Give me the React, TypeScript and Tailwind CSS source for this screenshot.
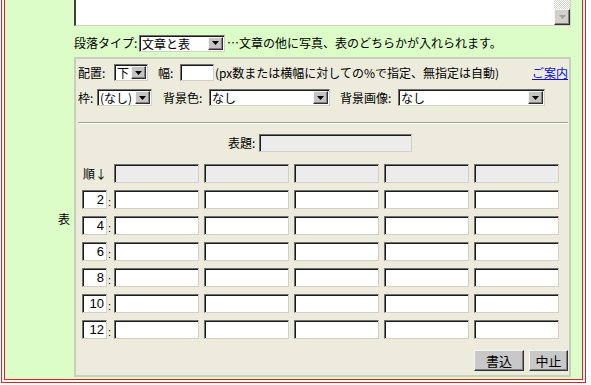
import React from "react";

const F = "font-['Noto_Sans_CJK_JP',sans-serif]";
const INSET =
  "border border-t-[#707070] border-l-[#707070] border-r-[#d4d0c8] border-b-[#d4d0c8] shadow-[inset_1px_1px_0_#1a1a1a]";
const RAISED =
  "border border-t-[#f4f4f4] border-l-[#f4f4f4] border-r-[#303030] border-b-[#303030] shadow-[inset_-1px_-1px_0_#808080]";

function Tri({ color = "#000" }: { color?: string }) {
  return (
    <svg width="7" height="4" viewBox="0 0 7 4">
      <polygon points="0,0 7,0 3.5,4" fill={color} />
    </svg>
  );
}

function Select({ className, text }: { className: string; text: string }) {
  return (
    <div className={`${className} h-[17px] flex bg-white ${INSET}`}>
      <div className="flex-1 pl-[2px] pt-[1px] leading-[13px] whitespace-nowrap overflow-hidden">
        {text}
      </div>
      <div
        className={`w-[15px] my-[1px] mr-[1px] bg-[#c4c4c4] flex items-center justify-center ${RAISED}`}
      >
        <Tri />
      </div>
    </div>
  );
}

function Cell({ gray }: { gray?: boolean }) {
  return (
    <div
      className={`w-[85px] h-[19px] ${gray ? "bg-[#ececec]" : "bg-white"} ${INSET}`}
    />
  );
}

const ROWS = ["2", "4", "6", "8", "10", "12"];

export default function App() {
  return (
    <div
      className={`w-[591px] h-[385px] overflow-hidden bg-white ${F} text-[12px] leading-[14px] text-black`}
    >
      <div className="ml-[1px] -mt-[40px] w-[585px] border border-[#cc2a2a] bg-[#fff4f4] p-[2px]">
        <div className="border border-[#cc2a2a] bg-[#dcfcc8] flex flex-col">
          {/* row A */}
          <div className="flex">
            <div className="w-[69px] shrink-0" />
            <div className="w-[498px] flex flex-col">
              <div
                className={`w-[497px] h-[62px] bg-white flex justify-end border-t-2 border-l-2 border-r border-b border-t-[#404040] border-l-[#404040] border-r-[#d4d0c8] border-b-[#d4d0c8]`}
              >
                <div className="w-[16px] flex flex-col bg-[repeating-conic-gradient(#d4d0c8_0_25%,#ffffff_0_50%)] bg-[length:2px_2px]">
                  <div className="flex-1" />
                  <div
                    className={`h-[16px] bg-[#d4d0c8] flex items-center justify-center ${RAISED}`}
                  >
                    <Tri color="#a0a0a0" />
                  </div>
                </div>
              </div>
              <div className="mt-[8px] mb-[5px] h-[18px] flex items-center">
                <span className="w-[65px]">段落タイプ:</span>
                <Select className="w-[86px]" text="文章と表" />
                <span className="ml-[2px]">…文章の他に写真、表のどちらかが入れられます。</span>
              </div>
            </div>
          </div>
          {/* row B */}
          <div className="flex pb-[2px]">
            <div className="w-[69px] shrink-0 flex items-center justify-end pr-[4px] pt-[3px]">
              表
            </div>
            <div className="w-[497px] h-[320px] border-2 border-[#c9cfbd] bg-[#ecebdc] flex flex-col">
              {/* row 1 */}
              <div className="mt-[5px] h-[17px] flex items-center pl-[2px] pr-[1px]">
                <span className="w-[36px]">配置:</span>
                <Select className="w-[34px]" text="下" />
                <span className="ml-[10px] w-[22px]">幅:</span>
                <div className={`w-[34px] h-[17px] bg-white ${INSET}`} />
                <span className="ml-[1px] whitespace-nowrap">
                  (px数または横幅に対しての%で指定、無指定は自動)
                </span>
                <span className="ml-auto text-[#1010d0] underline">ご案内</span>
              </div>
              {/* row 2 */}
              <div className="mt-[8px] h-[17px] flex items-center pl-[2px]">
                <span className="w-[19px]">枠:</span>
                <Select className="w-[55px]" text="(なし)" />
                <span className="ml-[11px] w-[46px]">背景色:</span>
                <Select className="w-[121px]" text="なし" />
                <span className="ml-[10px] w-[58px]">背景画像:</span>
                <Select className="w-[147px]" text="なし" />
              </div>
              {/* hr */}
              <div className="mt-[16px] ml-[2px] mr-[1px] border-t border-b border-t-[#a0a09a] border-b-white" />
              {/* title */}
              <div className="mt-[10px] h-[18px] flex items-center pl-[152px]">
                <span className="w-[31px]">表題:</span>
                <div className={`w-[153px] h-[18px] bg-[#ececec] ${INSET}`} />
              </div>
              {/* grid */}
              <div className="mt-[12px] pl-[6px] flex flex-col gap-[7px]">
                <div className="flex items-center h-[19px]">
                  <span className="w-[32px] pl-[1px]">順↓</span>
                  <div className="flex gap-[5px]">
                    <Cell gray />
                    <Cell gray />
                    <Cell gray />
                    <Cell gray />
                    <Cell gray />
                  </div>
                </div>
                {ROWS.map((n) => (
                  <div key={n} className="flex items-center h-[19px]">
                    <div className="w-[32px] flex items-center">
                      <div
                        className={`w-[25px] h-[19px] bg-white ${INSET} flex items-center justify-end pr-[2px] font-['Liberation_Sans',sans-serif] text-[13px]`}
                      >
                        {n}
                      </div>
                      <span className="font-['Liberation_Sans',sans-serif] text-[11px] pl-[1px] pt-[4px]">:</span>
                    </div>
                    <div className="flex gap-[5px]">
                      <Cell />
                      <Cell />
                      <Cell />
                      <Cell />
                      <Cell />
                    </div>
                  </div>
                ))}
              </div>
              {/* buttons */}
              <div className="mt-[11px] flex justify-end gap-[5px] pr-[1px]">
                <div
                  className={`w-[50px] h-[21px] bg-[#c8c8c8] flex items-center justify-center text-[13px] ${RAISED}`}
                >
                  書込
                </div>
                <div
                  className={`w-[39px] h-[21px] bg-[#c8c8c8] flex items-center justify-center text-[13px] ${RAISED}`}
                >
                  中止
                </div>
              </div>
            </div>
          </div>
        </div>
      </div>
    </div>
  );
}
